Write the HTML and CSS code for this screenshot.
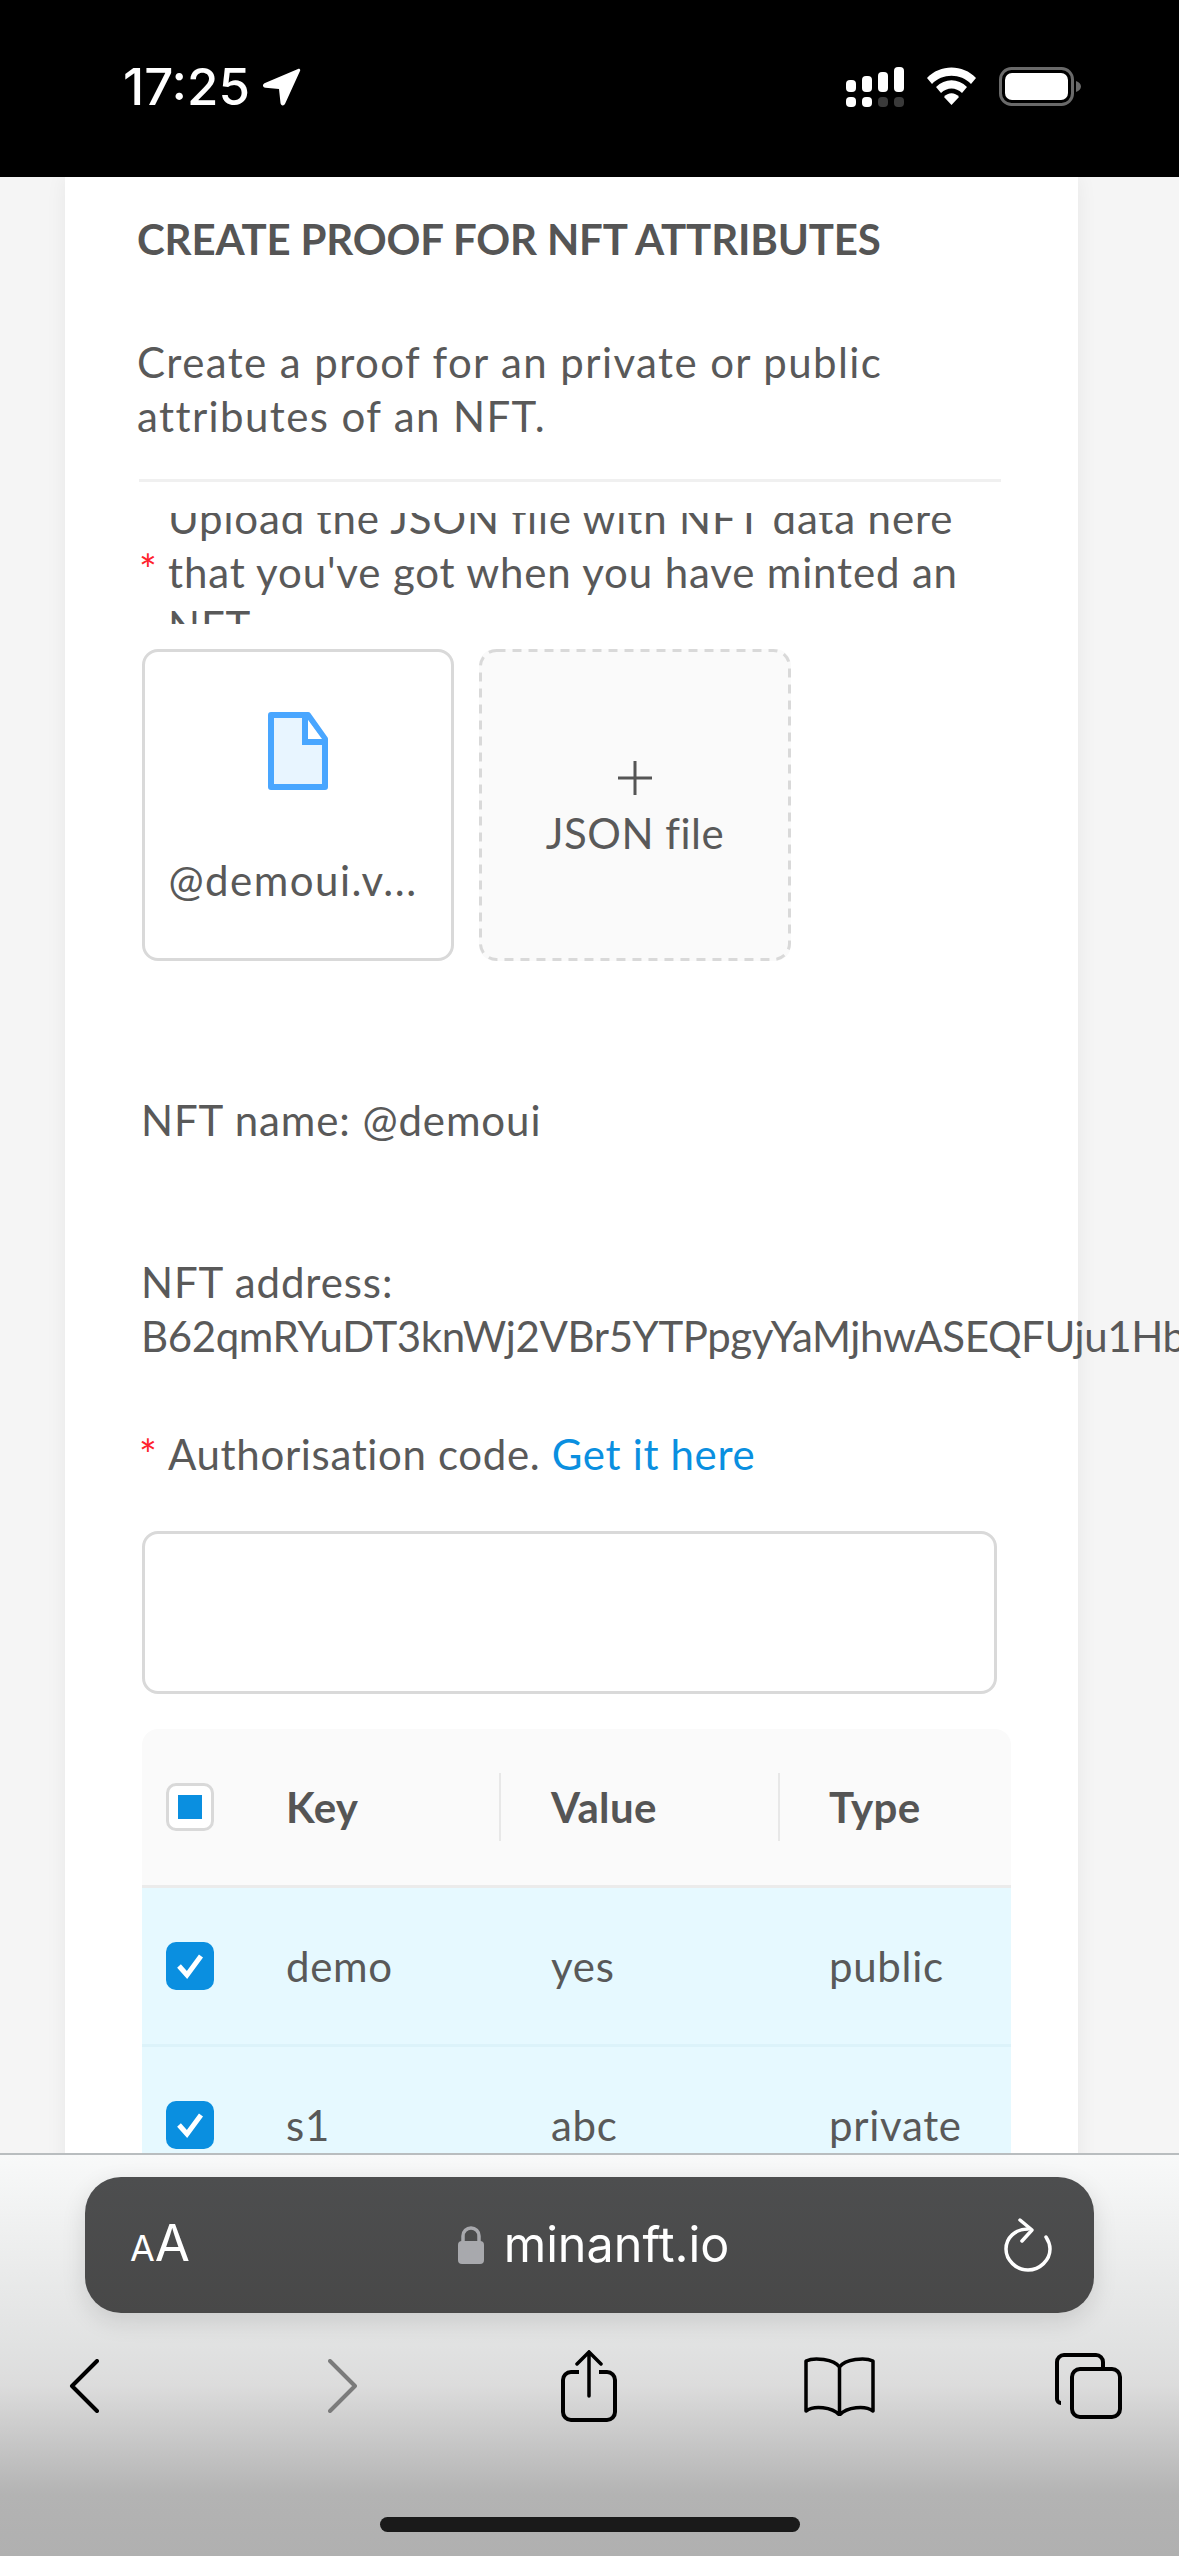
FILE: index.html
```html
<!DOCTYPE html>
<html lang="en">
<head>
    <meta charset="UTF-8">
    <meta name="viewport" content="width=device-width, initial-scale=1.0">
    <title>Create proof for NFT attributes</title>
    <link rel="stylesheet" href="styles.css">
</head>
<body>

    <header class="status-bar">
        <div class="status-left">
            <span class="status-time">17:25</span>
            <svg class="status-arrow" width="39" height="38" viewBox="0 0 39 38"><path d="M36 1 3 15c-3 1.300-2.500 4.500 0.500 4.800L17 21l1.500 14c.4 3 3.500 3.200 4.700.5L38 3c.7-1.500-.5-2.700-2-2z" fill="#fff"/></svg>
        </div>
        <div class="status-right">
            <svg width="58" height="40" viewBox="0 0 58 40">
                <rect x="0" y="13" width="10" height="12" rx="4" fill="#fff"/>
                <rect x="16" y="9" width="10" height="16" rx="4" fill="#fff"/>
                <rect x="32" y="5" width="10" height="20" rx="4" fill="#fff"/>
                <rect x="48" y="0" width="10" height="25" rx="4" fill="#fff"/>
                <rect x="0" y="30" width="10" height="10" rx="4" fill="#fff"/>
                <rect x="16" y="30" width="10" height="10" rx="4" fill="#fff"/>
                <rect x="32" y="30" width="10" height="10" rx="4" fill="#3a3a3a"/>
                <rect x="48" y="30" width="10" height="10" rx="4" fill="#3a3a3a"/>
            </svg>
            <svg width="51" height="38" viewBox="0 0 51 38">
                <path d="M1 11C14-3 37-3 50 11l-5 6C35 6 16 6 6 17z" fill="#fff"/>
                <path d="M10 20c9-9 22-9 31 0l-5 6c-6-6-15-6-21 0z" fill="#fff"/>
                <path d="M18 30c4-5 11-5 15 0l-7.500 8z" fill="#fff"/>
            </svg>
            <svg width="82" height="39" viewBox="0 0 82 39">
                <rect x="1.500" y="1.500" width="72" height="36" rx="11" fill="none" stroke="#6a6a6a" stroke-width="3"/>
                <rect x="6" y="6" width="63" height="27" rx="7" fill="#fff"/>
                <path d="M77 14c3 1 5 3 5 5.500s-2 4.500-5 5.500z" fill="#6a6a6a"/>
            </svg>
        </div>
    </header>

    <main class="page">
        <section class="card">
            <h1 class="card-title">CREATE PROOF FOR NFT ATTRIBUTES</h1>
            <p class="card-desc">Create a proof for an private or public attributes of an NFT.</p>
            <div class="divider"></div>

            <div class="upload-label">
                <span class="required">*</span>
                <div class="upload-text">Upload the JSON file with NFT data here that you've got when you have minted an NFT</div>
            </div>

            <div class="upload-list">
                <div class="upload-item">
                    <svg class="file-icon" width="60" height="78" viewBox="0 0 60 78">
                        <path d="M3 3h37l17 24v48H3z" fill="#e8f5ff" stroke="#49a6ff" stroke-width="6" stroke-linejoin="round"/>
                        <path d="M37 3v27h20" fill="none" stroke="#49a6ff" stroke-width="6"/>
                        <path d="M40 8v19h14z" fill="#fff"/>
                    </svg>
                    <span class="file-name">@demoui.v...</span>
                </div>
                <div class="upload-add">
                    <svg class="dash-border" width="312" height="312" viewBox="0 0 312 312"><rect x="1.500" y="1.500" width="309" height="309" rx="16" fill="none" stroke="#d9d9d9" stroke-width="3" stroke-dasharray="9 7"/></svg>
                    <svg width="34" height="34" viewBox="0 0 34 34"><path d="M17 0v34M0 17h34" stroke="#555" stroke-width="3"/></svg>
                    <span class="add-text">JSON file</span>
                </div>
            </div>

            <p class="nft-name">NFT name: @demoui</p>
            <p class="nft-address">NFT address:<br><span class="nft-hash">B62qmRYuDT3knWj2VBr5YTPpgyYaMjhwASEQFUju1Hb</span></p>

            <div class="auth-label"><span class="required">*</span> <span>Authorisation code. <a href="#">Get it here</a></span></div>
            <div class="auth-input"></div>

            <table class="attr-table">
                <thead>
                    <tr>
                        <th class="col-check"><span class="check-partial"></span></th>
                        <th class="col-key">Key</th>
                        <th class="col-value">Value</th>
                        <th>Type</th>
                    </tr>
                </thead>
                <tbody>
                    <tr>
                        <td class="col-check"><span class="check-on"><svg width="30" height="26" viewBox="0 0 30 26"><path d="M4 13l8 9L26 3" fill="none" stroke="#fff" stroke-width="5"/></svg></span></td>
                        <td>demo</td>
                        <td>yes</td>
                        <td>public</td>
                    </tr>
                    <tr>
                        <td class="col-check"><span class="check-on"><svg width="30" height="26" viewBox="0 0 30 26"><path d="M4 13l8 9L26 3" fill="none" stroke="#fff" stroke-width="5"/></svg></span></td>
                        <td>s1</td>
                        <td>abc</td>
                        <td>private</td>
                    </tr>
                </tbody>
            </table>
        </section>
    </main>

    <footer class="browser-bar">
        <div class="url-bar">
            <span class="url-aa"><small>A</small>A</span>
            <div class="url-host">
                <svg width="28" height="38" viewBox="0 0 28 38">
                    <path d="M6 17V10a8 8 0 0 1 16 0v7" fill="none" stroke="#a8a9ad" stroke-width="3.500"/>
                    <rect x="1" y="15" width="26" height="23" rx="4" fill="#a8a9ad"/>
                </svg>
                <span>minanft.io</span>
            </div>
            <svg width="48" height="54" viewBox="0 0 48 54">
                <path d="M24 11C11 11 2 20 2 31s10 21 22 21 22-10 22-21c0-5-2-9-4-12" fill="none" stroke="#fff" stroke-width="3.500" stroke-linecap="round"/>
                <path d="M16 2l12 10-10 11" fill="none" stroke="#fff" stroke-width="3.500" stroke-linecap="round" stroke-linejoin="round"/>
            </svg>
        </div>
        <nav class="toolbar">
            <svg class="tool-back" width="30" height="54" viewBox="0 0 30 54"><path d="M28 2 3 27l25 25" fill="none" stroke="#000" stroke-width="4" stroke-linecap="round" stroke-linejoin="round"/></svg>
            <svg class="tool-forward" width="30" height="54" viewBox="0 0 30 54"><path d="M2 2l25 25L2 52" fill="none" stroke="#7b7b7b" stroke-width="4" stroke-linecap="round" stroke-linejoin="round"/></svg>
            <svg class="tool-share" width="56" height="72" viewBox="0 0 56 72">
                <path d="M18 22H10a8 8 0 0 0-8 8v32a8 8 0 0 0 8 8h36a8 8 0 0 0 8-8V30a8 8 0 0 0-8-8h-8" fill="none" stroke="#000" stroke-width="4"/>
                <path d="M28 46V3M16 14 28 2l12 12" fill="none" stroke="#000" stroke-width="3.500" stroke-linecap="round"/>
            </svg>
            <svg class="tool-book" width="71" height="59" viewBox="0 0 71 59">
                <path d="M35.500 10C30 2 10 0 2 4v50c8-6 26-4 33.500 4 7.500-8 25.500-10 33.500-4V4C61 0 41 2 35.500 10zM35.500 10v48" fill="none" stroke="#000" stroke-width="3.500" stroke-linejoin="round"/>
            </svg>
            <svg class="tool-tabs" width="67" height="66" viewBox="0 0 67 66">
                <path d="M6 50a4 4 0 0 1-4-4V9a7 7 0 0 1 7-7h32a7 7 0 0 1 7 7v6" fill="none" stroke="#000" stroke-width="4"/>
                <rect x="17" y="16" width="48" height="48" rx="8" fill="none" stroke="#000" stroke-width="4"/>
            </svg>
        </nav>
        <div class="home-indicator"></div>
    </footer>

</body>
</html>
```

FILE: styles.css
```css
* {
    box-sizing: border-box;
}

html,
body {
    margin: 0;
    padding: 0;
    height: 2556px;
    overflow: hidden;
}

body {
    display: flex;
    flex-direction: column;
    background-color: #f5f5f5;
    font-family: "Lato", "Liberation Sans", sans-serif;
    font-size: 42px;
    line-height: 54px;
    color: #595959;
}

/* status bar */
.status-bar {
    flex: 0 0 177px;
    background-color: #000;
    display: flex;
    justify-content: space-between;
    align-items: flex-start;
    padding: 67px 98px 0 123px;
}

.status-left {
    display: flex;
    align-items: center;
    gap: 12px;
    height: 40px;
}

.status-time {
    font-family: "Inter", sans-serif;
    font-size: 51px;
    line-height: 40px;
    font-weight: 500;
    color: #fff;
}

.status-right {
    display: flex;
    align-items: flex-start;
    gap: 22px;
}

/* page */
.page {
    flex: 1;
    min-height: 0;
    overflow: hidden;
}

.card {
    width: 1013px;
    margin-left: 65px;
    padding: 35px 0 0 72px;
    background-color: #fff;
    box-shadow: 0 0 20px rgba(0, 0, 0, 0.06);
    min-height: 100%;
}

.card-title {
    margin: 0;
    font-size: 42px;
    line-height: 54px;
    font-weight: 700;
    letter-spacing: -0.17px;
    color: #555;
}

.card-desc {
    margin: 69px 0 0;
    width: 800px;
    letter-spacing: 1.4px;
}

.divider {
    width: 862px;
    height: 3px;
    margin: 36px 0 0 2px;
    background-color: #f0f0f0;
}

.upload-label {
    display: flex;
    height: 111px;
    margin-top: 31px;
    overflow: hidden;
}

.required {
    width: 29px;
    margin-left: 2px;
    flex-shrink: 0;
    color: #ff1f2e;
}

.upload-label .required {
    align-self: center;
}

.upload-text {
    width: 810px;
    margin-top: -22px;
    letter-spacing: 0.85px;
}

.upload-list {
    display: flex;
    gap: 25px;
    margin: 25px 0 0 5px;
}

.upload-item,
.upload-add {
    width: 312px;
    height: 312px;
    border-radius: 16px;
    display: flex;
    flex-direction: column;
    align-items: center;
}

.upload-item {
    border: 3px solid #d9d9d9;
    padding-top: 60px;
}

.file-name {
    margin: 63px 10px 0 0;
    letter-spacing: 1.5px;
}

.upload-add {
    position: relative;
    background-color: #fafafa;
    padding-top: 112px;
    gap: 11px;
}

.dash-border {
    position: absolute;
    left: 0;
    top: 0;
}

.add-text {
    letter-spacing: 0.5px;
}

.nft-name {
    margin: 132px 0 0 4px;
    letter-spacing: 0.9px;
}

.nft-address {
    margin: 108px 0 0 4px;
    white-space: nowrap;
    letter-spacing: 0.9px;
}

.nft-hash {
    letter-spacing: -0.4px;
}

.auth-label {
    display: flex;
    margin-top: 64px;
    letter-spacing: 0.65px;
}

.auth-label a {
    color: #0a8fe0;
    text-decoration: none;
}

.auth-input {
    width: 855px;
    height: 163px;
    margin: 50px 0 0 5px;
    border: 3px solid #d9d9d9;
    border-radius: 16px;
    background-color: #fff;
}

/* attributes table */
.attr-table {
    width: 869px;
    margin: 35px 0 0 5px;
    border-collapse: separate;
    border-spacing: 0;
    table-layout: fixed;
}

.attr-table th {
    height: 159px;
    padding: 0;
    background-color: #fafafa;
    border-bottom: 3px solid #ebebeb;
    text-align: left;
    font-weight: 700;
    letter-spacing: 0.4px;
    color: #555;
}

.attr-table th:first-child {
    border-top-left-radius: 16px;
}

.attr-table th:last-child {
    border-top-right-radius: 16px;
}

.attr-table td {
    height: 159px;
    padding: 0;
    background-color: #e6f9ff;
    border-bottom: 3px solid #dcf3fa;
    letter-spacing: 0.7px;
}

.col-check {
    width: 144px;
    padding-left: 24px !important;
}

.col-key,
.col-value {
    position: relative;
}

.col-key {
    width: 265px;
}

.col-value {
    width: 278px;
}

/* header column separators */
.col-key::after,
.col-value::after {
    content: "";
    position: absolute;
    top: 44px;
    height: 68px;
    width: 2px;
    background-color: #e8e8e8;
}

.col-key::after {
    left: 213px;
}

.col-value::after {
    left: 227px;
}

.check-partial,
.check-on {
    display: flex;
    align-items: center;
    justify-content: center;
    width: 48px;
    height: 48px;
    border-radius: 10px;
}

.check-partial {
    background-color: #fff;
    border: 3px solid #d9d9d9;
}

.check-partial::before {
    content: "";
    width: 24px;
    height: 24px;
    background-color: #0a8fe0;
}

.check-on {
    background-color: #0a8fe0;
}

/* safari bar */
.browser-bar {
    flex: 0 0 403px;
    border-top: 2px solid #b9bdbf;
    background: linear-gradient(#f8f9f9 0, #e1e2e2 190px, #dcdcdc 230px, #b3b3b3 340px, #b0b0b0 100%);
    display: flex;
    flex-direction: column;
    align-items: center;
}

.url-bar {
    width: 1009px;
    height: 136px;
    margin-top: 22px;
    padding: 0 42px 0 45px;
    border-radius: 36px;
    background: linear-gradient(#4d4e4f, #484848);
    box-shadow: 0 8px 24px rgba(0, 0, 0, 0.12);
    display: flex;
    align-items: center;
    justify-content: space-between;
    color: #fff;
    font-family: "Inter", sans-serif;
}

.url-aa {
    font-size: 51px;
    line-height: 54px;
}

.url-aa small {
    font-size: 36px;
}

.url-host {
    display: flex;
    align-items: center;
    gap: 19px;
    font-size: 48.5px;
    line-height: 54px;
    margin-right: 8px;
}

.toolbar {
    align-self: stretch;
    display: flex;
    align-items: center;
    height: 72px;
    margin-top: 37px;
    padding-left: 69px;
}

.tool-forward {
    margin-left: 229px;
}

.tool-share {
    margin-left: 203px;
}

.tool-book {
    margin-left: 187px;
}

.tool-tabs {
    margin-left: 180px;
}

.home-indicator {
    width: 420px;
    height: 15px;
    margin-top: 95px;
    border-radius: 8px;
    background-color: #1a1a1a;
}
```
